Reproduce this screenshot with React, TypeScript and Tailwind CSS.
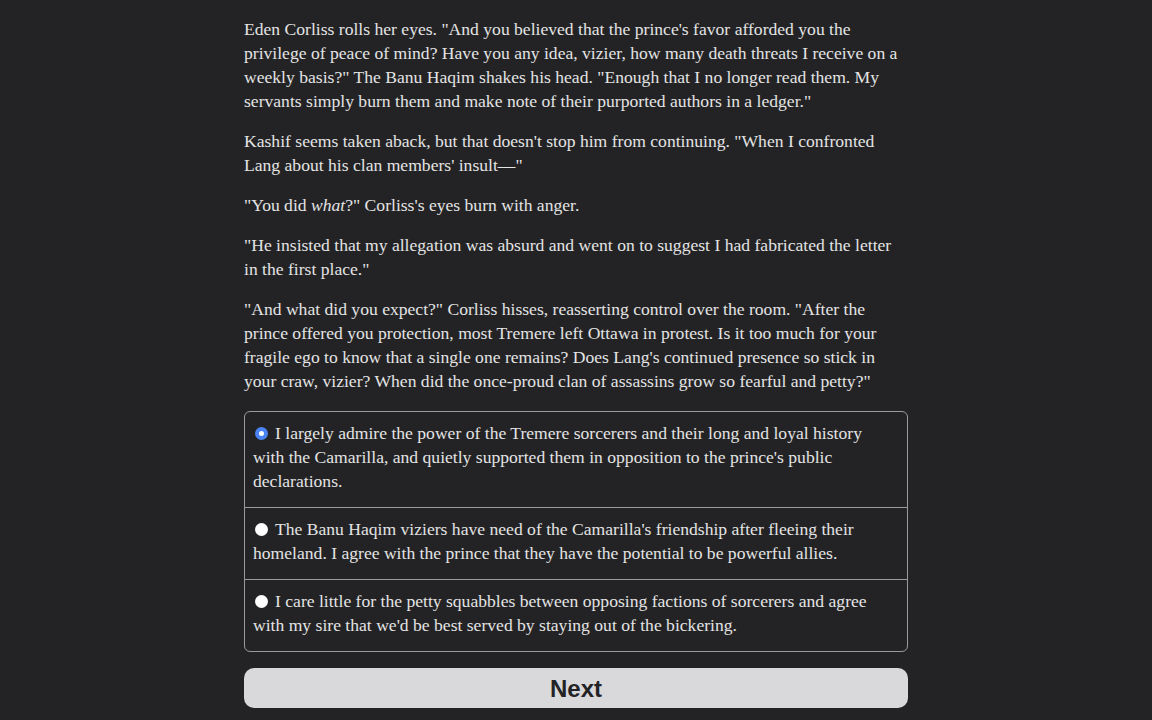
import React from "react";

const options = [
  "I largely admire the power of the Tremere sorcerers and their long and loyal history with the Camarilla, and quietly supported them in opposition to the prince's public declarations.",
  "The Banu Haqim viziers have need of the Camarilla's friendship after fleeing their homeland. I agree with the prince that they have the potential to be powerful allies.",
  "I care little for the petty squabbles between opposing factions of sorcerers and agree with my sire that we'd be best served by staying out of the bickering.",
];

export default function App() {
  const [selected, setSelected] = React.useState(0);

  return (
    <div className="min-h-screen bg-[#232325] text-[#e4e4e4] font-['Liberation_Serif',serif]">
      <div className="mx-auto w-[664px] pt-[17px] text-[17.6px] leading-[24px]">
        <p className="mb-4">
          Eden Corliss rolls her eyes. "And you believed that the prince's favor afforded you the privilege of peace of
          mind? Have you any idea, vizier, how many death threats I receive on a weekly basis?" The Banu Haqim shakes his
          head. "Enough that I no longer read them. My servants simply burn them and make note of their purported authors
          in a ledger."
        </p>
        <p className="mb-4">
          Kashif seems taken aback, but that doesn't stop him from continuing. "When I confronted Lang about his clan
          members' insult—"
        </p>
        <p className="mb-4">
          "You did <i>what</i>?" Corliss's eyes burn with anger.
        </p>
        <p className="mb-4">
          "He insisted that my allegation was absurd and went on to suggest I had fabricated the letter in the first
          place."
        </p>
        <p>
          "And what did you expect?" Corliss hisses, reasserting control over the room. "After the prince offered you
          protection, most Tremere left Ottawa in protest. Is it too much for your fragile ego to know that a single one
          remains? Does Lang's continued presence so stick in your craw, vizier? When did the once-proud clan of assassins
          grow so fearful and petty?"
        </p>

        <div className="mt-[18px] rounded-[6px] border border-[#9a9a9c]">
          {options.map((text, i) => (
            <label
              key={i}
              onClick={() => setSelected(i)}
              className={
                "block cursor-pointer pl-[8px] pr-3 pt-[9px] pb-[14px]" +
                (i > 0 ? " border-t border-[#9a9a9c]" : "")
              }
            >
              <span
                className={
                  "mr-[7px] ml-[2px] inline-block h-[13px] w-[13px] rounded-full bg-white align-[-1px]" +
                  (selected === i ? " border-[4px] border-[#4a84f4]" : "")
                }
              />
              {text}
            </label>
          ))}
        </div>

        <button className="mt-4 mb-4 h-10 w-full rounded-[10px] bg-[#d9d9dc] pt-px font-['Liberation_Sans',sans-serif] text-[24px] font-bold text-[#232325]">
          Next
        </button>
      </div>
    </div>
  );
}
